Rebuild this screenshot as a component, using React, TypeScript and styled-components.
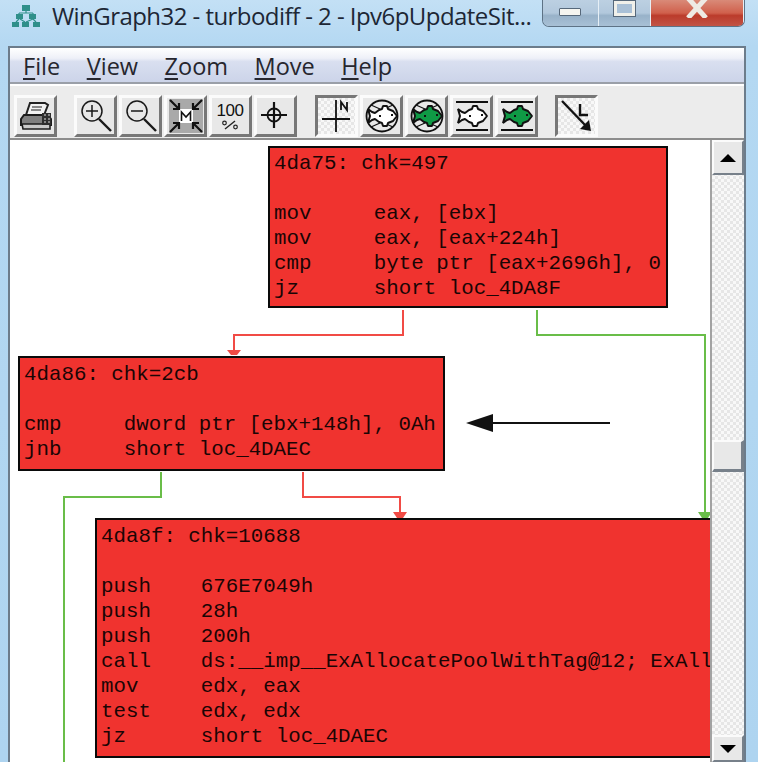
import styled, { createGlobalStyle, css } from 'styled-components';

const GlobalStyle = createGlobalStyle`
  html, body {
    margin: 0;
    padding: 0;
    background: #b9dbf3;
  }
`;

const Screen = styled.div`
  width: 758px;
  height: 762px;
  overflow: hidden;
  display: flex;
  flex-direction: column;
  background: linear-gradient(180deg, #c3e0f5 0%, #b4d8f2 6%, #aed4f0 100%);
  font-family: 'Open Sans', 'Liberation Sans', sans-serif;
`;

const TitleBar = styled.div`
  height: 46px;
  flex-shrink: 0;
  display: flex;
  align-items: flex-start;
  padding-left: 11px;
  padding-right: 13px;
`;

const AppIcon = styled.svg`
  width: 30px;
  height: 24px;
  margin-top: 4px;
  flex-shrink: 0;
`;

const Title = styled.div`
  margin-left: 11px;
  margin-top: 1px;
  width: 484px;
  flex-shrink: 0;
  font-size: 24px;
  line-height: 30px;
  letter-spacing: -0.55px;
  color: #1d2735;
  white-space: nowrap;
`;

const CaptionButtons = styled.div`
  margin-left: auto;
  width: 203px;
  height: 27px;
  flex-shrink: 0;
  display: flex;
  border: 1px solid #5d7285;
  border-top: none;
  border-radius: 0 0 7px 7px;
  box-sizing: border-box;
  overflow: hidden;
`;

const CaptionButton = styled.div<{ $w: number; $close?: boolean }>`
  width: ${p => p.$w}px;
  display: flex;
  justify-content: center;
  align-items: flex-start;
  border-right: 1px solid #e6eff6;
  background: ${p =>
    p.$close
      ? 'linear-gradient(180deg, #d98a78 0%, #d0604c 50%, #bb3b2b 60%, #c25445 100%)'
      : 'linear-gradient(180deg, #bcd0e2 0%, #b2c8dc 50%, #98b2c9 60%, #a8c0d5 100%)'};
`;

const MinGlyph = styled.div`
  width: 22px;
  height: 8px;
  margin-top: 8px;
  box-sizing: border-box;
  background: #f5f5f0;
  border: 1px solid #56687a;
  border-radius: 1px;
`;

const MaxGlyph = styled.div`
  width: 23px;
  height: 17px;
  box-sizing: border-box;
  border: 4px solid #f0f0ea;
  outline: 1px solid #56687a;
  outline-offset: -1px;
  background: #a9c0d6;
`;

const Win = styled.div`
  margin-left: 8px;
  width: 738px;
  flex: 1;
  min-height: 0;
  display: flex;
  flex-direction: column;
  box-sizing: border-box;
  border: 2px solid #6c7c8b;
  border-bottom: none;
  background: #ececec;
`;

const MenuBar = styled.div`
  height: 36px;
  flex-shrink: 0;
  box-sizing: border-box;
  display: flex;
  gap: 26.500px;
  padding: 3px 0 0 13px;
  background: linear-gradient(180deg, #ffffff 0%, #eef0f8 30%, #d9dff0 40%, #ccd4e9 100%);
  border-bottom: 2px solid #9a9fa8;
`;

const MenuItem = styled.span`
  font-size: 23.500px;
  line-height: 30px;
  color: #26262e;
  u {
    text-underline-offset: 3px;
  }
`;

const Toolbar = styled.div`
  height: 56px;
  flex-shrink: 0;
  box-sizing: border-box;
  display: flex;
  align-items: flex-start;
  padding: 9px 0 0 2px;
  background: #ececec;
  border-top: 2px solid #ffffff;
  border-bottom: 2px solid #8d8d8d;
`;

const checker = css`
  background-color: #f8f8f8;
  background-image: conic-gradient(#e6e6e6 25%, transparent 0 50%, #e6e6e6 0 75%, transparent 0);
  background-size: 6px 6px;
`;

const ToolButton = styled.div<{ $pressed?: boolean; $gap?: number }>`
  width: 43px;
  height: 42px;
  flex-shrink: 0;
  margin-left: ${p => p.$gap ?? 2}px;
  box-sizing: border-box;
  display: flex;
  align-items: center;
  justify-content: center;
  background: #e8e8e8;
  border: 3px solid;
  border-color: #fbfbfb #777777 #777777 #fbfbfb;
  ${p =>
    p.$pressed &&
    css`
      ${checker}
      border-color: #777777 #fbfbfb #fbfbfb #777777;
    `}
`;

const ToolIcon = styled.svg`
  width: 34px;
  height: 34px;
  display: block;
`;

const HundredLabel = styled.text`
  font-family: 'Liberation Sans', sans-serif;
  font-size: 17px;
  letter-spacing: -0.5px;
  fill: #111;
`;

const Workspace = styled.div`
  flex: 1;
  min-height: 0;
  display: flex;
  background: #ffffff;
`;

const Diagram = styled.div`
  position: relative;
  width: 700px;
  overflow: hidden;
  background: #ffffff;
`;

const Edges = styled.svg`
  position: absolute;
  inset: 0;
  width: 700px;
  height: 622px;
`;

const GraphNode = styled.pre<{ $x: number; $y: number; $w: number; $h: number; $pad?: number }>`
  position: absolute;
  left: ${p => p.$x}px;
  top: ${p => p.$y}px;
  width: ${p => p.$w}px;
  height: ${p => p.$h}px;
  margin: 0;
  box-sizing: border-box;
  overflow: hidden;
  padding: ${p => p.$pad ?? 3}px 0 0 4px;
  background: #f0332f;
  border: 2px solid #0a0a0a;
  color: #1a0505;
  font-family: 'Liberation Mono', 'DejaVu Sans Mono', monospace;
  font-size: 20.800px;
  line-height: 25px;
  white-space: pre;
`;

const Scrollbar = styled.div`
  width: 34px;
  flex-shrink: 0;
  box-sizing: border-box;
  display: flex;
  flex-direction: column;
  border-left: 2px solid #a2a2a2;
  ${checker}
`;

const ScrollButton = styled.div<{ $h: number }>`
  height: ${p => p.$h}px;
  flex-shrink: 0;
  box-sizing: border-box;
  display: flex;
  align-items: center;
  justify-content: center;
  background: #e8e8e8;
  border: 2px solid;
  border-color: #fbfbfb #77808a #77808a #fbfbfb;
`;

const ScrollGap = styled.div<{ $h: number }>`
  height: ${p => p.$h}px;
  flex-shrink: 0;
`;

const Thumb = styled(ScrollButton)`
  border-width: 2px 3px 3px 2px;
`;

const Arrow = styled.div<{ $down?: boolean }>`
  width: 0;
  height: 0;
  border-left: 8px solid transparent;
  border-right: 8px solid transparent;
  ${p => (p.$down ? 'border-top: 8px solid #000;' : 'border-bottom: 8px solid #000;')}
`;

const RED = '#f14b45';
const GREEN = '#69bd48';

// toolbar drawings, all on a 34x34 grid
const Printer = () => (
  <ToolIcon viewBox="0 0 34 34">
    <path d="M11 4h15l3 2-4 10H7z" fill="#f2f2f2" stroke="#222" strokeWidth="2" />
    <path d="M13 8h10M12 11h10" stroke="#666" strokeWidth="1.500" />
    <path d="M5 16h24l3 4v6H2v-6z" fill="#808080" stroke="#1c1c1c" strokeWidth="2" />
    <path d="M3 25h28v5H4z" fill="#c9c9c9" stroke="#1c1c1c" strokeWidth="1.600" />
    <path d="M23 14h9v12h-9z" fill="#2e2e2e" />
    <path d="M25 16h2M29 16h2M25 20h2M29 20h2M25 23h2M29 23h2" stroke="#ddd" strokeWidth="1.200" />
  </ToolIcon>
);

const Magnifier = ({ plus }: { plus?: boolean }) => (
  <ToolIcon viewBox="0 0 34 34">
    <circle cx="13" cy="12" r="10" fill="none" stroke="#1a1a1a" strokeWidth="1.500" />
    <path d="M7 12h12" stroke="#1a1a1a" strokeWidth="1.500" />
    {plus && <path d="M13 6v12" stroke="#1a1a1a" strokeWidth="1.500" />}
    <path d="M20 20l12 12" stroke="#1a1a1a" strokeWidth="2.400" />
  </ToolIcon>
);

const FitIcon = () => (
  <ToolIcon viewBox="0 0 34 34">
    <path d="M0 0h34v34H0z" fill="#a9a9a9" />
    <path d="M10 10h14v14H10z" fill="#ffffff" />
    <path d="M1 1l9 9M10 4v6H4M33 1l-9 9M24 4v6h6M1 33l9-9M10 30v-6H4M33 33l-9-9M24 30v-6h6" stroke="#111" strokeWidth="2.200" fill="none" />
    <path d="M12.500 22v-9l4.500 5 4.500-5v9" fill="none" stroke="#111" strokeWidth="1.600" />
  </ToolIcon>
);

const HundredIcon = () => (
  <ToolIcon viewBox="0 0 34 34">
    <HundredLabel x="16" y="17" textAnchor="middle">100</HundredLabel>
    <circle cx="10.500" cy="24" r="1.800" fill="none" stroke="#222" strokeWidth="1.200" />
    <path d="M11 30l10-8" stroke="#222" strokeWidth="1.400" />
    <circle cx="21.500" cy="28" r="1.800" fill="none" stroke="#222" strokeWidth="1.200" />
  </ToolIcon>
);

const CenterIcon = () => (
  <ToolIcon viewBox="0 0 34 34">
    <circle cx="15" cy="16" r="6.500" fill="none" stroke="#111" strokeWidth="1.800" />
    <path d="M15 3v26M2 16h26" stroke="#111" strokeWidth="2.200" />
  </ToolIcon>
);

const NorthIcon = () => (
  <ToolIcon viewBox="0 0 34 34">
    <path d="M16 1v32M2 20h28" stroke="#111" strokeWidth="1.800" />
    <path d="M21 11V3l6 8V3" fill="none" stroke="#111" strokeWidth="1.800" />
  </ToolIcon>
);

const LayoutIcon = () => (
  <ToolIcon viewBox="0 0 34 34">
    <path d="M2 2l24 25" stroke="#111" strokeWidth="2.400" />
    <path d="M31 32l-11-2 9-9z" fill="#111" />
    <path d="M20 5v11h8" fill="none" stroke="#111" strokeWidth="2.400" />
  </ToolIcon>
);

const fishPath =
  'M3 10l4 3 3 1 4-3 3-1 1-3h4l1 3 5 2 4 5-4 5-5 2-1 3h-4l-1-3-3-1-4-3-3 1-4 3 2-7z';

const Fish = ({ fill }: { fill: string }) => (
  <>
    <path d={fishPath} fill={fill} stroke="#111" strokeWidth="2" strokeLinejoin="bevel" />
    <path d="M26 15h2v2h-2zM14 16h2v2h-2z" fill="#111" />
  </>
);

const FishCircle = ({ fill }: { fill: string }) => (
  <ToolIcon viewBox="0 0 34 34">
    <circle cx="17" cy="17" r="15.500" fill="none" stroke="#111" strokeWidth="1.800" />
    <path d="M6 6l9 4M28 6l-9 4M6 28l9-4M28 28l-9-4" stroke="#111" strokeWidth="1.200" />
    <Fish fill={fill} />
  </ToolIcon>
);

const FishBars = ({ fill }: { fill: string }) => (
  <ToolIcon viewBox="0 0 34 34">
    <path d="M1 3h32M1 31h32" stroke="#111" strokeWidth="1.800" />
    <Fish fill={fill} />
  </ToolIcon>
);

export default function App() {
  return (
    <>
      <GlobalStyle />
      <Screen>
        <TitleBar>
          <AppIcon viewBox="0 0 30 24">
            <g fill="#2f8f8a">
              <rect x="11" y="1" width="8" height="6" />
              <rect x="5" y="10" width="7" height="5" />
              <rect x="18" y="10" width="7" height="5" />
              <rect x="1" y="18" width="7" height="5" />
              <rect x="11" y="18" width="7" height="5" />
              <rect x="22" y="18" width="7" height="5" />
            </g>
            <path d="M15 7v2M8 9h14M8 9v1M22 9v1M8 15l-3 3M9 15l5 3M22 15l-7 3M22 15l3 3" stroke="#2f8f8a" strokeWidth="1.200" fill="none" />
          </AppIcon>
          <Title>WinGraph32 - turbodiff - 2 - Ipv6pUpdateSit...</Title>
          <CaptionButtons>
            <CaptionButton $w={56}><MinGlyph /></CaptionButton>
            <CaptionButton $w={53}><MaxGlyph /></CaptionButton>
            <CaptionButton $w={94} $close>
              <svg width="24" height="18" viewBox="0 0 24 18">
                <path d="M3-2l18 20M21-2L3 18" stroke="#eeeae4" strokeWidth="5" />
              </svg>
            </CaptionButton>
          </CaptionButtons>
        </TitleBar>
        <Win>
          <MenuBar>
            <MenuItem><u>F</u>ile</MenuItem>
            <MenuItem><u>V</u>iew</MenuItem>
            <MenuItem><u>Z</u>oom</MenuItem>
            <MenuItem><u>M</u>ove</MenuItem>
            <MenuItem><u>H</u>elp</MenuItem>
          </MenuBar>
          <Toolbar>
            <ToolButton><Printer /></ToolButton>
            <ToolButton $gap={17}><Magnifier plus /></ToolButton>
            <ToolButton><Magnifier /></ToolButton>
            <ToolButton><FitIcon /></ToolButton>
            <ToolButton><HundredIcon /></ToolButton>
            <ToolButton><CenterIcon /></ToolButton>
            <ToolButton $gap={18} $pressed><NorthIcon /></ToolButton>
            <ToolButton><FishCircle fill="#ffffff" /></ToolButton>
            <ToolButton><FishCircle fill="#0f9a45" /></ToolButton>
            <ToolButton><FishBars fill="#ffffff" /></ToolButton>
            <ToolButton><FishBars fill="#0f9a45" /></ToolButton>
            <ToolButton $gap={17} $pressed><LayoutIcon /></ToolButton>
          </Toolbar>
          <Workspace>
            <Diagram>
              <Edges viewBox="10 140 700 622">
                <g fill="none" strokeWidth="2">
                  <path d="M403 310v25H234v16" stroke={RED} />
                  <path d="M537 310v25h168v178" stroke={GREEN} />
                  <path d="M303 472v25h97v16" stroke={RED} />
                  <path d="M161 472v25H64v265" stroke={GREEN} />
                </g>
                <path d="M227 350h14l-4 5h-6z" fill={RED} />
                <path d="M393 512h14l-4 6h-6z" fill={RED} />
                <path d="M698 512h14l-4 6h-6z" fill={GREEN} />
                <path d="M492 423h118" stroke="#111" strokeWidth="2" />
                <path d="M466 423l27-9v18z" fill="#111" />
              </Edges>
              <GraphNode $x={258} $y={6} $w={400} $h={162}>{`4da75: chk=497

mov     eax, [ebx]
mov     eax, [eax+224h]
cmp     byte ptr [eax+2696h], 0
jz      short loc_4DA8F`}</GraphNode>
              <GraphNode $x={8} $y={216} $w={427} $h={115} $pad={4}>{`4da86: chk=2cb

cmp     dword ptr [ebx+148h], 0Ah
jnb     short loc_4DAEC`}</GraphNode>
              <GraphNode $x={85} $y={378} $w={680} $h={240} $pad={4}>{`4da8f: chk=10688

push    676E7049h
push    28h
push    200h
call    ds:__imp__ExAllocatePoolWithTag@12; ExAll
mov     edx, eax
test    edx, edx
jz      short loc_4DAEC`}</GraphNode>
            </Diagram>
            <Scrollbar>
              <ScrollButton $h={35}><Arrow /></ScrollButton>
              <ScrollGap $h={265} />
              <Thumb $h={32} />
              <ScrollGap $h={263} />
              <ScrollButton $h={27}><Arrow $down /></ScrollButton>
            </Scrollbar>
          </Workspace>
        </Win>
      </Screen>
    </>
  );
}
